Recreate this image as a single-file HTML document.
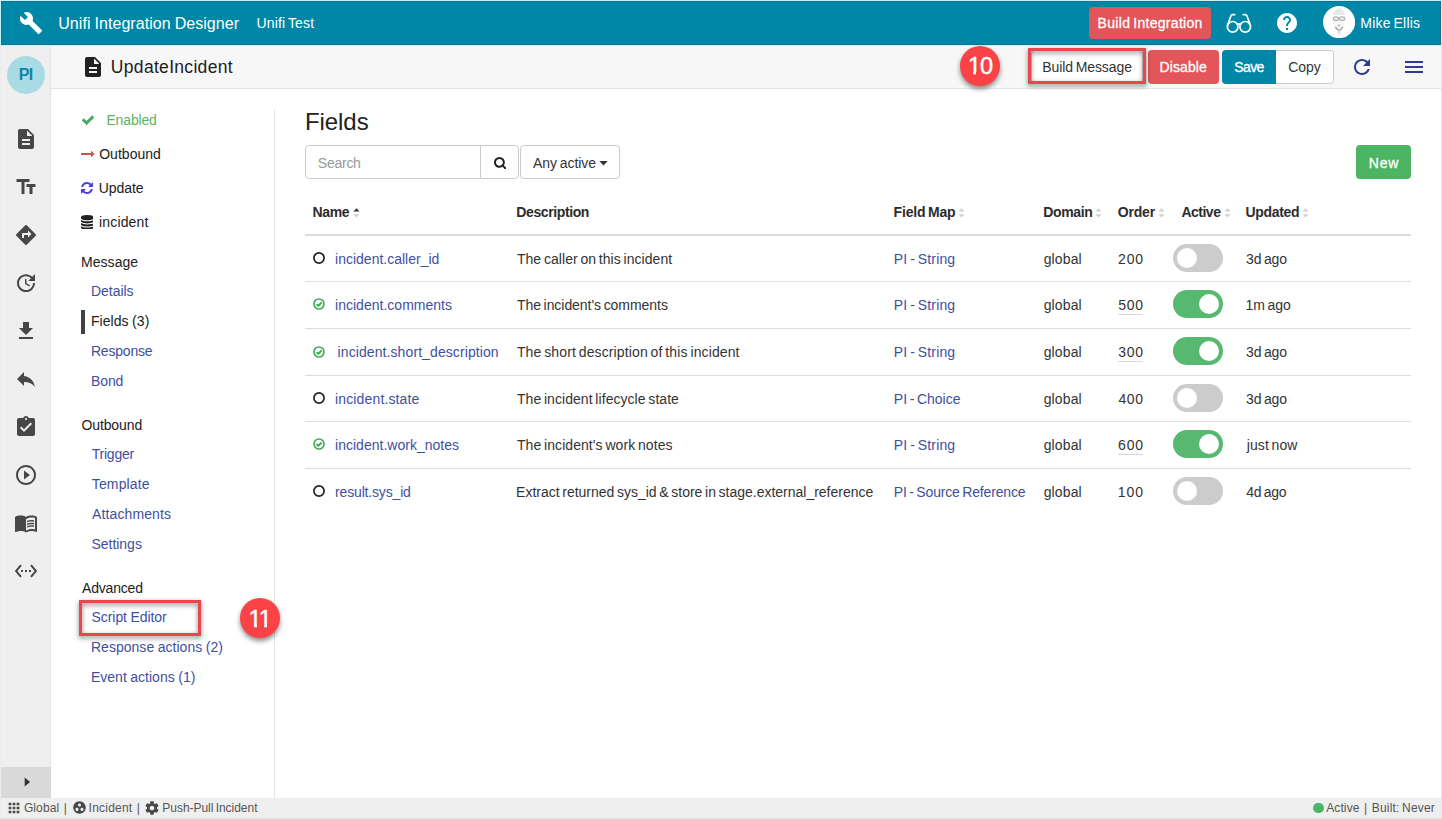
<!DOCTYPE html>
<html lang="en">
<head>
<meta charset="utf-8">
<title>Unifi Integration Designer</title>
<style>
*{box-sizing:border-box;margin:0;padding:0}
html,body{width:1442px;height:819px;overflow:hidden;background:#fff}
body{position:relative;font-family:"Liberation Sans",sans-serif;color:#212121;font-size:14px}
.abs,.t,svg.i{position:absolute}
.t{white-space:nowrap;line-height:20px;height:20px;z-index:5}
#frame{position:absolute;left:0;top:46px;width:1442px;height:773px;border:1px solid #e6e6e6;border-left-color:#ececec;border-bottom-color:#e2e2e2;border-top:0;z-index:50}
#hdr{left:1px;top:1px;width:1440px;height:43.500px;background:#0086a6;border:1px solid #17718c}
#hdrglow{left:0;top:0;width:1442px;height:46px;background:#c6f4fb}
#hdrglow2{left:0;top:45.500px;width:1442px;height:1px;background:#f3f3f3}
#side{left:1px;top:45.500px;width:50px;height:752.500px;background:#efefef;border-right:1px solid #e5e5e5}
#exp{left:1px;top:767px;width:50px;height:31px;background:#d9d9d9}
#tool{left:51px;top:45.500px;width:1390px;height:43.500px;background:#f7f7f7;border-bottom:1px solid #e5e5e5}
#foot{left:1px;top:798px;width:1440px;height:20px;background:#efefef}
#navline{left:274px;top:109px;width:1px;height:689px;background:#e6e6e6}
.btn{position:absolute;border-radius:4px;border:1px solid transparent}
.sep{position:absolute;left:305px;width:1106px;height:1px;background:#dddddd}
.tog{position:absolute;left:1173px;width:50px;height:28px;border-radius:14px;background:#cccccc}
.tog i{position:absolute;top:4px;left:3.500px;width:20px;height:20px;border-radius:50%;background:#fff}
.tog.on{background:#57b86f}
.tog.on i{left:25.500px}
.ul{position:absolute;left:1118px;width:25px;height:1px;background:#d8d8d8}
.badge{position:absolute;width:40px;height:40px;border-radius:50%;background:#fb4347;box-shadow:0 3px 5px rgba(0,0,0,.45);z-index:4}
.hl{position:absolute;border:3px solid #e8484d;filter:drop-shadow(0 2px 2.500px rgba(0,0,0,.5));z-index:4}
</style>
</head>
<body>
<div id="hdrglow" class="abs"></div>
<div id="hdr" class="abs"></div>
<div id="side" class="abs"></div>
<div id="exp" class="abs"></div>
<div id="tool" class="abs"></div>
<div id="navline" class="abs"></div>
<div id="foot" class="abs"></div>
<!-- header icons -->
<svg class="i" style="left:19px;top:11.200px" width="24" height="24" viewBox="0 0 24 24"><path fill="#fff" d="M22.7 19l-9.1-9.1c.9-2.3.4-5-1.500-6.900-2-2-5-2.400-7.400-1.300L9 6 6 9 1.600 4.700C.4 7.100.9 10.100 2.900 12.100c1.900 1.900 4.600 2.400 6.900 1.500l9.100 9.100c.4.400 1 .4 1.400 0l2.300-2.300c.5-.4.5-1.100.1-1.400z"/></svg>
<div class="btn" style="left:1089.300px;top:7.200px;width:121.600px;height:31.400px;background:#e35558"></div>
<svg class="i" style="left:1224px;top:11px" width="30" height="24" viewBox="0 0 30 24" fill="none" stroke="#fff" stroke-width="1.7" stroke-linecap="round" stroke-linejoin="round"><circle cx="8.7" cy="15.8" r="5.3"/><circle cx="21.2" cy="15.800" r="5.3"/><path d="M13.600 13.500q1.350-1.100 2.700 0"/><path d="M3.400 14.500L7 4.800q.4-1.100 1.600-1.100h2.100"/><path d="M26.500 14.500L22.900 4.800q-.4-1.100-1.600-1.100h-2.100"/></svg>
<svg class="i" style="left:1275px;top:10.500px" width="24" height="24" viewBox="0 0 24 24"><path fill="#fff" d="M12 2C6.480 2 2 6.480 2 12s4.480 10 10 10 10-4.480 10-10S17.520 2 12 2zm1 17h-2v-2h2v2zm2.070-7.750l-.9.920C13.450 12.900 13 13.500 13 15h-2v-.5c0-1.100.45-2.100 1.170-2.830l1.240-1.260c.37-.36.590-.86.590-1.410 0-1.100-.9-2-2-2s-2 .9-2 2H8c0-2.210 1.790-4 4-4s4 1.790 4 4c0 .88-.36 1.680-.93 2.250z"/></svg>
<svg class="i" style="left:1323px;top:5.800px" width="32.200" height="32.200" viewBox="0 0 32 32"><circle cx="16" cy="16" r="16" fill="#fff"/><path d="M10.200 8.900Q10.500 4.200 16 1.900 21.500 4.200 21.800 8.900z" fill="#e8e8e8"/><path d="M10.800 15.500h10.400l-.6 4.500-4.600 9.500-4.600-9.500z" fill="#f6f6f6"/><rect x="10.400" y="10.900" width="5" height="3.400" rx=".8" fill="#ececec" stroke="#9a9a9a" stroke-width=".9"/><rect x="16.600" y="10.900" width="5" height="3.400" rx=".8" fill="#ececec" stroke="#9a9a9a" stroke-width=".9"/><path d="M14.400 18.400h3.200l-.9 1.900h-1.400z" fill="#c4c4c4"/><path d="M12.300 20.800Q16 27.300 19.700 20.800" fill="none" stroke="#a8a8a8" stroke-width="1.500"/><path d="M14 24.300h4l-2 5.300z" fill="#dedede"/></svg>
<!-- sidebar -->
<div class="abs" style="left:7px;top:55.500px;width:38px;height:38px;border-radius:50%;background:#a9dbe5"></div>
<svg class="i" style="left:14px;top:127px" width="24" height="24" viewBox="0 0 24 24"><path fill="#474747" d="M14 2H6c-1.100 0-1.990.9-1.990 2L4 20c0 1.100.89 2 1.990 2H18c1.100 0 2-.9 2-2V8l-6-6zm2 16H8v-2h8v2zm0-4H8v-2h8v2zm-3-5V3.500L18.500 9H13z"/></svg>
<svg class="i" style="left:14.400px;top:175px" width="24" height="24" viewBox="0 0 24 24"><path fill="#474747" d="M2.500 4v3h5v12h3V7h5V4h-13zm19 5h-9v3h3v7h3v-7h3V9z"/></svg>
<svg class="i" style="left:14.250px;top:223.400px" width="24" height="24" viewBox="0 0 24 24"><path fill="#474747" d="M21.710 11.290l-9-9c-.39-.39-1.020-.39-1.410 0l-9 9c-.39.390-.39 1.020 0 1.410l9 9c.39.390 1.020.390 1.410 0l9-9c.39-.38.390-1.010 0-1.410zM14 14.500V12h-4v3H8v-4c0-.55.450-1 1-1h5V7.500l3.500 3.500-3.500 3.500z"/></svg>
<svg class="i" style="left:14px;top:270.700px" width="24" height="24" viewBox="0 0 24 24"><path fill="#474747" d="M21 10.120h-6.780l2.740-2.820c-2.730-2.700-7.150-2.800-9.880-.1-2.730 2.710-2.730 7.080 0 9.790 2.730 2.710 7.150 2.710 9.880 0C18.320 15.650 19 14.080 19 12.100h2c0 1.980-.88 4.550-2.640 6.290-3.510 3.480-9.210 3.480-12.720 0-3.500-3.470-3.530-9.110-.020-12.580 3.510-3.470 9.140-3.470 12.650 0L21 3v7.120zM12.500 8v4.250l3.500 2.080-.72 1.210L11 13V8h1.500z"/></svg>
<svg class="i" style="left:14px;top:318.700px" width="24" height="24" viewBox="0 0 24 24"><path fill="#474747" d="M19 9h-4V3H9v6H5l7 7 7-7zM5 18v2h14v-2H5z"/></svg>
<svg class="i" style="left:14px;top:366.700px" width="24" height="24" viewBox="0 0 24 24"><path fill="#474747" d="M10 9V5l-7 7 7 7v-4.100c5 0 8.500 1.600 11 5.100-1-5-4-10-11-11z"/></svg>
<svg class="i" style="left:14px;top:415px" width="24" height="24" viewBox="0 0 24 24"><path fill="#474747" d="M19 3h-4.180C14.400 1.840 13.300 1 12 1c-1.300 0-2.400.84-2.820 2H5c-1.100 0-2 .9-2 2v14c0 1.100.9 2 2 2h14c1.100 0 2-.9 2-2V5c0-1.100-.9-2-2-2zm-7 0c.55 0 1 .45 1 1s-.45 1-1 1-1-.45-1-1 .45-1 1-1zm-2 14l-4-4 1.410-1.410L10 14.170l6.590-6.590L18 9l-8 8z"/></svg>
<svg class="i" style="left:14px;top:462.600px" width="24" height="24" viewBox="0 0 24 24"><path fill="#474747" d="M10 16.500l6-4.500-6-4.500v9zM12 2C6.480 2 2 6.480 2 12s4.480 10 10 10 10-4.480 10-10S17.520 2 12 2zm0 18c-4.410 0-8-3.590-8-8s3.590-8 8-8 8 3.590 8 8-3.590 8-8 8z"/></svg>
<svg class="i" style="left:13.700px;top:510.700px" width="24" height="24" viewBox="0 0 24 24"><path fill="#474747" d="M21 5c-1.110-.35-2.330-.5-3.500-.5-1.950 0-4.050.4-5.500 1.500-1.450-1.100-3.550-1.500-5.500-1.500S2.450 4.900 1 6v14.650c0 .25.250.5.5.5.100 0 .150-.05.250-.05C3.100 20.450 5.050 20 6.500 20c1.950 0 4.050.4 5.500 1.500 1.350-.85 3.800-1.500 5.500-1.500 1.650 0 3.350.3 4.750 1.050.100.050.150.050.250.050.250 0 .5-.25.5-.5V6c-.6-.45-1.250-.75-2-1zm0 13.500c-1.100-.35-2.300-.5-3.500-.5-1.700 0-4.150.65-5.500 1.500V8c1.350-.85 3.800-1.500 5.500-1.500 1.200 0 2.400.15 3.500.5v11.500z"/><path fill="#474747" d="M17.500 10.500c.88 0 1.730.09 2.500.26V9.240c-.79-.15-1.640-.24-2.500-.24-1.700 0-3.240.29-4.500.83v1.660c1.130-.64 2.700-.99 4.500-.99zM13 12.490v1.660c1.130-.64 2.700-.99 4.500-.99.880 0 1.730.09 2.500.26V11.900c-.79-.15-1.640-.24-2.500-.24-1.700 0-3.240.3-4.500.83zM17.500 14.330c-1.700 0-3.240.29-4.500.83v1.660c1.130-.64 2.700-.99 4.500-.99.880 0 1.730.09 2.500.26v-1.520c-.79-.16-1.640-.24-2.500-.24z"/></svg>
<svg class="i" style="left:14px;top:558.600px" width="24" height="24" viewBox="0 0 24 24"><path fill="#474747" d="M7.770 6.760L6.230 5.480.82 12l5.410 6.520 1.540-1.280L3.420 12l4.350-5.240zM7 13h2v-2H7v2zm10-2h-2v2h2v-2zm-6 2h2v-2h-2v2zm6.770-7.520l-1.540 1.280L20.580 12l-4.350 5.240 1.540 1.280L23.180 12l-5.410-6.520z"/></svg>
<svg class="i" style="left:15.400px;top:770.200px" width="24" height="24" viewBox="0 0 24 24"><path fill="#333" d="M9.700 7.500l5.400 4.500-5.400 4.500z"/></svg>
<!-- toolbar -->
<svg class="i" style="left:81px;top:54.500px" width="24" height="24" viewBox="0 0 24 24"><path fill="#212121" d="M14 2H6c-1.100 0-1.990.9-1.990 2L4 20c0 1.100.89 2 1.990 2H18c1.100 0 2-.9 2-2V8l-6-6zm2 16H8v-2h8v2zm0-4H8v-2h8v2zm-3-5V3.500L18.500 9H13z"/></svg>
<div class="badge" style="left:960px;top:46px"></div>
<div class="btn" style="left:1031px;top:50px;width:112px;height:34px;background:#fff;border-color:#ccc"></div>
<div class="hl" style="left:1028px;top:48px;width:118px;height:36px"></div>
<div class="btn" style="left:1147.600px;top:50px;width:71.400px;height:34px;background:#e35558"></div>
<div class="btn" style="left:1222px;top:50px;width:55px;height:34px;background:#0087a7;border-radius:4px 0 0 4px"></div>
<div class="btn" style="left:1276px;top:50px;width:58px;height:34px;background:#fff;border-color:#ccc;border-left:0;border-radius:0 4px 4px 0"></div>
<svg class="i" style="left:1350px;top:55px" width="24" height="24" viewBox="0 0 24 24"><path fill="#2f3a94" d="M17.650 6.350C16.200 4.900 14.210 4 12 4c-4.420 0-7.990 3.580-7.990 8s3.570 8 7.990 8c3.730 0 6.840-2.550 7.730-6h-2.080c-.82 2.330-3.040 4-5.650 4-3.310 0-6-2.690-6-6s2.690-6 6-6c1.660 0 3.140.69 4.220 1.780L13 11h7V4l-2.350 2.350z"/></svg>
<svg class="i" style="left:1402.400px;top:55px" width="24" height="24" viewBox="0 0 24 24"><path fill="#2f3a94" d="M3 18h18v-2H3v2zm0-5h18v-2H3v2zm0-7v2h18V6H3z"/></svg>
<!-- nav icons -->
<svg class="i" style="left:81px;top:113.300px" width="14" height="14" viewBox="0 0 1792 1792"><path fill="#46aa5c" d="M1671 566q0 40-28 68l-724 724-136 136q-28 28-68 28t-68-28l-136-136-362-362q-28-28-28-68t28-68l136-136q28-28 68-28t68 28l294 295 656-657q28-28 68-28t68 28l136 136q28 28 28 68z"/></svg>
<svg class="i" style="left:80.500px;top:146.700px" width="14" height="14" viewBox="0 0 1792 1792"><path fill="#cc5452" d="M1728 893q0 14-10 24l-384 354q-16 14-35 6-19-9-19-29v-224h-1248q-14 0-23-9t-9-23v-192q0-14 9-23t23-9h1248v-224q0-21 19-29t35 5l384 350q10 10 10 23z"/></svg>
<svg class="i" style="left:80px;top:181.200px" width="14" height="14" viewBox="0 0 1792 1792"><path fill="#4b41d8" d="M1639 1056q0 5-1 7-64 268-268 434.500t-478 166.500q-146 0-282.500-55t-243.500-157l-129 129q-19 19-45 19t-45-19-19-45v-448q0-26 19-45t45-19h448q26 0 45 19t19 45-19 45l-137 137q71 66 161 102t187 36q134 0 250-65t186-179q11-17 53-117 8-23 30-23h192q13 0 22.500 9.500t9.500 22.500zm25-800v448q0 26-19 45t-45 19h-448q-26 0-45-19t-19-45 19-45l138-138q-148-137-349-137-134 0-250 65t-186 179q-11 17-53 117-8 23-30 23h-199q-13 0-22.500-9.500t-9.500-22.500v-7q65-268 270-434.500t480-166.500q146 0 284 55.500t245 156.500l130-129q19-19 45-19t45 19 19 45z"/></svg>
<svg class="i" style="left:80.800px;top:214.500px" width="12.600" height="14.700" viewBox="0 0 1536 1792"><path fill="#222" d="M768 768q237 0 443-43t325-127v170q0 69-103 128t-280 93.500-385 34.500-385-34.500-280-93.500-103-128v-170q119 84 325 127t443 43zm0 768q237 0 443-43t325-127v170q0 69-103 128t-280 93.500-385 34.500-385-34.500-280-93.500-103-128v-170q119 84 325 127t443 43zm0-384q237 0 443-43t325-127v170q0 69-103 128t-280 93.500-385 34.500-385-34.500-280-93.500-103-128v-170q119 84 325 127t443 43zm0-1152q208 0 385 34.500t280 93.500 103 128v128q0 69-103 128t-280 93.500-385 34.500-385-34.500-280-93.500-103-128v-128q0-69 103-128t280-93.500 385-34.500z"/></svg>
<div class="abs" style="left:81px;top:310px;width:4px;height:24px;background:#424242"></div>
<div class="hl" style="left:79.200px;top:600.300px;width:122px;height:35.700px"></div>
<div class="badge" style="left:240px;top:598px"></div>
<!-- content -->
<div class="btn" style="left:305px;top:145px;width:176px;height:34px;background:#fff;border-color:#ccc;border-radius:4px 0 0 4px"></div>
<div class="btn" style="left:480px;top:145px;width:38.700px;height:34px;background:#fff;border-color:#ccc;border-radius:0 4px 4px 0"></div>
<svg class="i" style="left:493.500px;top:155.500px" width="12.800" height="13.800" viewBox="0 0 1664 1792"><path fill="#222" d="M1152 832q0-185-131.500-316.500t-316.500-131.500-316.500 131.500-131.500 316.500 131.500 316.500 316.500 131.500 316.500-131.500 131.500-316.500zm512 832q0 52-38 90t-90 38q-54 0-90-38l-343-342q-179 124-399 124-143 0-273.500-55.500t-225-150-150-225-55.500-273.500 55.500-273.500 150-225 225-150 273.500-55.500 273.500 55.500 225 150 150 225 55.500 273.500q0 220-124 399l343 343q37 37 37 90z"/></svg>
<div class="btn" style="left:519.700px;top:145px;width:100.500px;height:34px;background:#fff;border-color:#ccc"></div>
<svg class="i" style="left:598.700px;top:160.800px" width="9" height="5" viewBox="0 0 9 5"><path fill="#333" d="M.3 0h8.400L4.500 4.500z"/></svg>
<div class="btn" style="left:1356px;top:145px;width:55px;height:34px;background:#4cb563"></div>
<div class="abs" style="left:305px;top:234px;width:1106px;height:2px;background:#dcdcdc"></div>
<div class="sep" style="top:281px"></div>
<div class="sep" style="top:328px"></div>
<div class="sep" style="top:375px"></div>
<div class="sep" style="top:421px"></div>
<div class="sep" style="top:468px"></div>
<svg class="i" style="left:352.5px;top:207.500px" width="7" height="10" viewBox="0 0 7 10"><path fill="#333" d="M.4 3.600h6.200L3.500.3z"/><path fill="#cfcfcf" d="M.4 6.200h6.200L3.500 9.500z"/></svg>
<svg class="i" style="left:957.6px;top:207.500px" width="7" height="10" viewBox="0 0 7 10"><path fill="#cfcfcf" d="M.4 3.600h6.200L3.500.3z"/><path fill="#cfcfcf" d="M.4 6.200h6.200L3.500 9.500z"/></svg>
<svg class="i" style="left:1094.5px;top:207.500px" width="7" height="10" viewBox="0 0 7 10"><path fill="#cfcfcf" d="M.4 3.600h6.200L3.500.3z"/><path fill="#cfcfcf" d="M.4 6.200h6.200L3.500 9.500z"/></svg>
<svg class="i" style="left:1157.8px;top:207.500px" width="7" height="10" viewBox="0 0 7 10"><path fill="#cfcfcf" d="M.4 3.600h6.200L3.500.3z"/><path fill="#cfcfcf" d="M.4 6.200h6.200L3.500 9.500z"/></svg>
<svg class="i" style="left:1223.5px;top:207.500px" width="7" height="10" viewBox="0 0 7 10"><path fill="#cfcfcf" d="M.4 3.600h6.200L3.500.3z"/><path fill="#cfcfcf" d="M.4 6.200h6.200L3.500 9.500z"/></svg>
<svg class="i" style="left:1301.6px;top:207.500px" width="7" height="10" viewBox="0 0 7 10"><path fill="#cfcfcf" d="M.4 3.600h6.200L3.500.3z"/><path fill="#cfcfcf" d="M.4 6.200h6.200L3.500 9.500z"/></svg>
<svg class="i" style="left:312.400px;top:251.00px" width="14" height="14" viewBox="0 0 14 14" fill="none" stroke="#222" stroke-width="1.700"><circle cx="7" cy="7" r="5.100"/></svg>
<div class="tog" style="top:244.0px"><i></i></div>
<svg class="i" style="left:312.400px;top:297.10px" width="14" height="14" viewBox="0 0 14 14" fill="none" stroke="#46aa5c" stroke-width="1.700"><circle cx="7" cy="7" r="5"/><path stroke-width="2" d="M4.500 7.100l1.800 1.800 3.300-3.400"/></svg>
<div class="ul" style="top:314px"></div>
<div class="tog on" style="top:290.1px"><i></i></div>
<svg class="i" style="left:312.400px;top:345.10px" width="14" height="14" viewBox="0 0 14 14" fill="none" stroke="#46aa5c" stroke-width="1.700"><circle cx="7" cy="7" r="5"/><path stroke-width="2" d="M4.500 7.100l1.800 1.800 3.300-3.400"/></svg>
<div class="ul" style="top:361px"></div>
<div class="tog on" style="top:337.2px"><i></i></div>
<svg class="i" style="left:312.400px;top:391.00px" width="14" height="14" viewBox="0 0 14 14" fill="none" stroke="#222" stroke-width="1.700"><circle cx="7" cy="7" r="5.100"/></svg>
<div class="tog" style="top:384.0px"><i></i></div>
<svg class="i" style="left:312.400px;top:437.05px" width="14" height="14" viewBox="0 0 14 14" fill="none" stroke="#46aa5c" stroke-width="1.700"><circle cx="7" cy="7" r="5"/><path stroke-width="2" d="M4.500 7.100l1.800 1.800 3.300-3.400"/></svg>
<div class="ul" style="top:454px"></div>
<div class="tog on" style="top:430.2px"><i></i></div>
<svg class="i" style="left:312.400px;top:483.80px" width="14" height="14" viewBox="0 0 14 14" fill="none" stroke="#222" stroke-width="1.700"><circle cx="7" cy="7" r="5.100"/></svg>
<div class="tog" style="top:477.2px"><i></i></div>
<!-- footer -->
<svg class="i" style="left:6px;top:799.500px" width="16" height="16" viewBox="0 0 24 24"><path fill="#474747" d="M4 8h4V4H4v4zm6 12h4v-4h-4v4zm-6 0h4v-4H4v4zm0-6h4v-4H4v4zm6 0h4v-4h-4v4zm6-10v4h4V4h-4zm-6 4h4V4h-4v4zm6 6h4v-4h-4v4zm0 6h4v-4h-4v4z"/></svg>
<svg class="i" style="left:71.700px;top:800.200px" width="15" height="15" viewBox="0 0 24 24"><path fill="#474747" d="M12 2C6.480 2 2 6.480 2 12s4.480 10 10 10 10-4.480 10-10S17.520 2 12 2zM8 17.500c-1.380 0-2.500-1.120-2.500-2.500s1.120-2.500 2.500-2.500 2.500 1.120 2.500 2.500-1.120 2.500-2.500 2.500zM9.500 8c0-1.380 1.120-2.500 2.500-2.500s2.500 1.120 2.500 2.500-1.120 2.500-2.500 2.500S9.500 9.380 9.500 8zm6.500 9.500c-1.380 0-2.500-1.120-2.500-2.500s1.120-2.500 2.500-2.500 2.500 1.120 2.500 2.500-1.120 2.500-2.500 2.500z"/></svg>
<svg class="i" style="left:144.300px;top:799.700px" width="16" height="16" viewBox="0 0 24 24"><path fill="#474747" d="M19.430 12.980c.04-.32.070-.64.070-.98s-.03-.66-.07-.98l2.110-1.650c.19-.15.240-.42.120-.64l-2-3.460c-.12-.22-.39-.3-.61-.22l-2.490 1c-.52-.4-1.080-.73-1.690-.98l-.38-2.650C14.460 2.180 14.250 2 14 2h-4c-.25 0-.46.180-.49.420l-.38 2.650c-.61.250-1.170.590-1.690.98l-2.490-1c-.23-.09-.49 0-.61.220l-2 3.460c-.13.220-.07.490.12.640l2.110 1.650c-.04.320-.07.650-.07.980s.03.660.07.980l-2.110 1.650c-.19.150-.24.420-.12.640l2 3.460c.12.220.39.300.61.220l2.490-1c.52.400 1.080.730 1.690.98l.38 2.650c.03.240.24.420.49.420h4c.25 0 .46-.18.490-.42l.38-2.650c.61-.25 1.170-.59 1.690-.98l2.490 1c.23.090.49 0 .61-.22l2-3.460c.12-.22.070-.49-.12-.64l-2.110-1.650zM12 15.500c-1.930 0-3.500-1.570-3.500-3.500s1.570-3.500 3.500-3.500 3.500 1.570 3.500 3.500-1.570 3.500-3.500 3.500z"/></svg>
<div class="abs" style="left:1313.300px;top:802.500px;width:10.500px;height:10.500px;border-radius:50%;background:#4cb563"></div>
<!-- badge digit foot covers -->
<div class="abs" style="left:968.400px;top:71.600px;width:4.600px;height:3.700px;background:#fb4347;z-index:7"></div>
<div class="abs" style="left:976px;top:71.600px;width:4.500px;height:3.700px;background:#fb4347;z-index:7"></div>
<div class="abs" style="left:249.400px;top:624.600px;width:4.600px;height:3.700px;background:#fb4347;z-index:7"></div>
<div class="abs" style="left:257px;top:624.600px;width:7px;height:3.700px;background:#fb4347;z-index:7"></div>
<div class="abs" style="left:267px;top:624.600px;width:5px;height:3.700px;background:#fb4347;z-index:7"></div>

<span class="t" style="left:58.27px;top:14.00px;font-size:16px;font-weight:400;color:#fff;letter-spacing:0.047px;word-spacing:-0.48px">Unifi Integration Designer</span>
<span class="t" style="left:256.42px;top:13.00px;font-size:14px;font-weight:400;color:#fff;letter-spacing:0.172px;word-spacing:-1.19px">Unifi Test</span>
<span class="t" style="left:1097.60px;top:13.00px;font-size:14px;font-weight:400;color:#fff;letter-spacing:0.301px;word-spacing:-1.19px;-webkit-text-stroke:.3px #fff">Build Integration</span>
<span class="t" style="left:1360.35px;top:13.00px;font-size:14px;font-weight:400;color:#fff;letter-spacing:0.191px;word-spacing:-1.19px">Mike Ellis</span>
<span class="t" style="left:110.85px;top:57.00px;font-size:17.5px;font-weight:400;color:#212121;letter-spacing:0.311px">UpdateIncident</span>
<span class="t" style="left:18.63px;top:65.00px;font-size:16px;font-weight:700;color:#0c86a5;letter-spacing:-0.584px">PI</span>
<span class="t" style="left:968.11px;top:56.00px;font-size:23.5px;font-weight:400;color:#fff;letter-spacing:-1.133px;z-index:6;-webkit-text-stroke:.45px #fff">10</span>
<span class="t" style="left:1042.35px;top:57.00px;font-size:14px;font-weight:400;color:#333333;letter-spacing:-0.089px;word-spacing:-1.19px">Build Message</span>
<span class="t" style="left:1159.60px;top:57.00px;font-size:14px;font-weight:400;color:#fff;letter-spacing:0.095px;-webkit-text-stroke:.3px #fff">Disable</span>
<span class="t" style="left:1234.36px;top:57.00px;font-size:14px;font-weight:400;color:#fff;letter-spacing:-0.638px;-webkit-text-stroke:.3px #fff">Save</span>
<span class="t" style="left:1288.29px;top:57.00px;font-size:14px;font-weight:400;color:#333333;letter-spacing:-0.066px">Copy</span>
<span class="t" style="left:106.45px;top:110.00px;font-size:14px;font-weight:400;color:#5cb460;letter-spacing:-0.157px">Enabled</span>
<span class="t" style="left:99.14px;top:144.00px;font-size:14px;font-weight:400;color:#212121;letter-spacing:0.038px">Outbound</span>
<span class="t" style="left:98.72px;top:178.00px;font-size:14px;font-weight:400;color:#212121;letter-spacing:-0.051px">Update</span>
<span class="t" style="left:99.06px;top:212.00px;font-size:14px;font-weight:400;color:#212121;letter-spacing:0.146px">incident</span>
<span class="t" style="left:80.95px;top:252.00px;font-size:14px;font-weight:400;color:#212121;letter-spacing:0.060px">Message</span>
<span class="t" style="left:81.44px;top:415.00px;font-size:14px;font-weight:400;color:#212121;letter-spacing:-0.105px">Outbound</span>
<span class="t" style="left:82.07px;top:578.00px;font-size:14px;font-weight:400;color:#212121;letter-spacing:-0.193px">Advanced</span>
<span class="t" style="left:90.95px;top:281.00px;font-size:14px;font-weight:400;color:#3f4f9f;letter-spacing:-0.024px">Details</span>
<span class="t" style="left:90.95px;top:311.00px;font-size:14px;font-weight:400;color:#212121;letter-spacing:0.053px;word-spacing:-0.42px">Fields (3)</span>
<span class="t" style="left:90.95px;top:341.00px;font-size:14px;font-weight:400;color:#3f4f9f;letter-spacing:-0.197px">Response</span>
<span class="t" style="left:90.95px;top:371.00px;font-size:14px;font-weight:400;color:#3f4f9f;letter-spacing:-0.084px">Bond</span>
<span class="t" style="left:91.79px;top:444.00px;font-size:14px;font-weight:400;color:#3f4f9f;letter-spacing:-0.247px">Trigger</span>
<span class="t" style="left:91.79px;top:474.00px;font-size:14px;font-weight:400;color:#3f4f9f;letter-spacing:0.132px">Template</span>
<span class="t" style="left:92.07px;top:504.00px;font-size:14px;font-weight:400;color:#3f4f9f;letter-spacing:0.111px">Attachments</span>
<span class="t" style="left:91.46px;top:534.00px;font-size:14px;font-weight:400;color:#3f4f9f;letter-spacing:-0.022px">Settings</span>
<span class="t" style="left:91.46px;top:607.00px;font-size:14px;font-weight:400;color:#3f4f9f;letter-spacing:-0.047px;word-spacing:-0.42px">Script Editor</span>
<span class="t" style="left:90.95px;top:637.00px;font-size:14px;font-weight:400;color:#3f4f9f;letter-spacing:0.029px;word-spacing:-0.42px">Response actions (2)</span>
<span class="t" style="left:90.95px;top:667.00px;font-size:14px;font-weight:400;color:#3f4f9f;letter-spacing:0.012px;word-spacing:-0.42px">Event actions (1)</span>
<span class="t" style="left:248.61px;top:609.00px;font-size:23.5px;font-weight:400;color:#fff;letter-spacing:-1.200px;z-index:6;-webkit-text-stroke:.45px #fff">11</span>
<span class="t" style="left:304.93px;top:112.00px;font-size:24px;font-weight:400;color:#212121;letter-spacing:-0.059px">Fields</span>
<span class="t" style="left:317.86px;top:153.00px;font-size:14px;font-weight:400;color:#999;letter-spacing:-0.263px">Search</span>
<span class="t" style="left:532.97px;top:153.00px;font-size:14px;font-weight:400;color:#333333;letter-spacing:-0.028px;word-spacing:-1.19px">Any active</span>
<span class="t" style="left:1368.75px;top:153.00px;font-size:14px;font-weight:400;color:#fff;letter-spacing:0.799px;-webkit-text-stroke:.3px #fff">New</span>
<span class="t" style="left:312.56px;top:202.00px;font-size:14px;font-weight:700;color:#2c2c2c;letter-spacing:-0.409px">Name</span>
<span class="t" style="left:516.31px;top:202.00px;font-size:14px;font-weight:700;color:#2c2c2c;letter-spacing:-0.396px">Description</span>
<span class="t" style="left:893.56px;top:202.00px;font-size:14px;font-weight:700;color:#2c2c2c;letter-spacing:-0.170px;word-spacing:-1.19px">Field Map</span>
<span class="t" style="left:1043.31px;top:202.00px;font-size:14px;font-weight:700;color:#2c2c2c;letter-spacing:-0.358px">Domain</span>
<span class="t" style="left:1117.68px;top:202.00px;font-size:14px;font-weight:700;color:#2c2c2c;letter-spacing:-0.147px">Order</span>
<span class="t" style="left:1181.40px;top:202.00px;font-size:14px;font-weight:700;color:#2c2c2c;letter-spacing:-0.491px">Active</span>
<span class="t" style="left:1245.41px;top:202.00px;font-size:14px;font-weight:700;color:#2c2c2c;letter-spacing:-0.289px">Updated</span>
<span class="t" style="left:335.06px;top:249.00px;font-size:14px;font-weight:400;color:#3f4f9f;letter-spacing:0.002px">incident.caller_id</span>
<span class="t" style="left:516.94px;top:249.00px;font-size:14px;font-weight:400;color:#333333;letter-spacing:0.045px;word-spacing:-1.19px">The caller on this incident</span>
<span class="t" style="left:893.85px;top:249.00px;font-size:14px;font-weight:400;color:#3f4f9f;letter-spacing:0.143px;word-spacing:-1.19px">PI - String</span>
<span class="t" style="left:1043.66px;top:249.00px;font-size:14px;font-weight:400;color:#333333;letter-spacing:0.130px">global</span>
<span class="t" style="left:1118.05px;top:249.00px;font-size:14px;font-weight:400;color:#333333;letter-spacing:0.821px">200</span>
<span class="t" style="left:1245.97px;top:249.00px;font-size:14px;font-weight:400;color:#333333;letter-spacing:-0.103px;word-spacing:-1.19px">3d ago</span>
<span class="t" style="left:335.06px;top:295.00px;font-size:14px;font-weight:400;color:#3f4f9f;letter-spacing:0.014px">incident.comments</span>
<span class="t" style="left:516.94px;top:295.00px;font-size:14px;font-weight:400;color:#333333;letter-spacing:-0.048px;word-spacing:-1.19px">The incident's comments</span>
<span class="t" style="left:893.85px;top:295.00px;font-size:14px;font-weight:400;color:#3f4f9f;letter-spacing:0.143px;word-spacing:-1.19px">PI - String</span>
<span class="t" style="left:1043.66px;top:295.00px;font-size:14px;font-weight:400;color:#333333;letter-spacing:0.130px">global</span>
<span class="t" style="left:1118.19px;top:295.00px;font-size:14px;font-weight:400;color:#333333;letter-spacing:0.749px">500</span>
<span class="t" style="left:1245.43px;top:295.00px;font-size:14px;font-weight:400;color:#333333;letter-spacing:-0.022px;word-spacing:-1.19px">1m ago</span>
<span class="t" style="left:337.56px;top:342.00px;font-size:14px;font-weight:400;color:#3f4f9f;letter-spacing:0.093px">incident.short_description</span>
<span class="t" style="left:516.94px;top:342.00px;font-size:14px;font-weight:400;color:#333333;letter-spacing:0.119px;word-spacing:-1.19px">The short description of this incident</span>
<span class="t" style="left:893.85px;top:342.00px;font-size:14px;font-weight:400;color:#3f4f9f;letter-spacing:0.143px;word-spacing:-1.19px">PI - String</span>
<span class="t" style="left:1043.66px;top:342.00px;font-size:14px;font-weight:400;color:#333333;letter-spacing:0.130px">global</span>
<span class="t" style="left:1118.22px;top:342.00px;font-size:14px;font-weight:400;color:#333333;letter-spacing:0.735px">300</span>
<span class="t" style="left:1245.97px;top:342.00px;font-size:14px;font-weight:400;color:#333333;letter-spacing:-0.103px;word-spacing:-1.19px">3d ago</span>
<span class="t" style="left:335.06px;top:389.00px;font-size:14px;font-weight:400;color:#3f4f9f;letter-spacing:0.139px">incident.state</span>
<span class="t" style="left:516.94px;top:389.00px;font-size:14px;font-weight:400;color:#333333;letter-spacing:0.050px;word-spacing:-1.19px">The incident lifecycle state</span>
<span class="t" style="left:893.85px;top:389.00px;font-size:14px;font-weight:400;color:#3f4f9f;letter-spacing:-0.030px;word-spacing:-1.19px">PI - Choice</span>
<span class="t" style="left:1043.66px;top:389.00px;font-size:14px;font-weight:400;color:#333333;letter-spacing:0.130px">global</span>
<span class="t" style="left:1118.43px;top:389.00px;font-size:14px;font-weight:400;color:#333333;letter-spacing:0.629px">400</span>
<span class="t" style="left:1245.97px;top:389.00px;font-size:14px;font-weight:400;color:#333333;letter-spacing:-0.103px;word-spacing:-1.19px">3d ago</span>
<span class="t" style="left:335.06px;top:435.00px;font-size:14px;font-weight:400;color:#3f4f9f;letter-spacing:0.011px">incident.work_notes</span>
<span class="t" style="left:516.94px;top:435.00px;font-size:14px;font-weight:400;color:#333333;letter-spacing:0.067px;word-spacing:-1.19px">The incident's work notes</span>
<span class="t" style="left:893.85px;top:435.00px;font-size:14px;font-weight:400;color:#3f4f9f;letter-spacing:0.143px;word-spacing:-1.19px">PI - String</span>
<span class="t" style="left:1043.66px;top:435.00px;font-size:14px;font-weight:400;color:#333333;letter-spacing:0.130px">global</span>
<span class="t" style="left:1118.04px;top:435.00px;font-size:14px;font-weight:400;color:#333333;letter-spacing:0.824px">600</span>
<span class="t" style="left:1246.84px;top:435.00px;font-size:14px;font-weight:400;color:#333333;letter-spacing:0.051px;word-spacing:-1.19px">just now</span>
<span class="t" style="left:335.07px;top:482.00px;font-size:14px;font-weight:400;color:#3f4f9f;letter-spacing:-0.165px">result.sys_id</span>
<span class="t" style="left:516.10px;top:482.00px;font-size:14px;font-weight:400;color:#333333;letter-spacing:-0.012px;word-spacing:-1.19px">Extract returned sys_id &amp; store in stage.external_reference</span>
<span class="t" style="left:893.85px;top:482.00px;font-size:14px;font-weight:400;color:#3f4f9f;letter-spacing:-0.159px;word-spacing:-1.19px">PI - Source Reference</span>
<span class="t" style="left:1043.66px;top:482.00px;font-size:14px;font-weight:400;color:#333333;letter-spacing:0.130px">global</span>
<span class="t" style="left:1117.68px;top:482.00px;font-size:14px;font-weight:400;color:#333333;letter-spacing:1.002px">100</span>
<span class="t" style="left:1246.18px;top:482.00px;font-size:14px;font-weight:400;color:#333333;letter-spacing:-0.246px;word-spacing:-1.19px">4d ago</span>
<span class="t" style="left:23.90px;top:798.00px;font-size:12px;font-weight:400;color:#555;letter-spacing:0.104px">Global</span>
<span class="t" style="left:63.83px;top:798.00px;font-size:12px;font-weight:400;color:#555;letter-spacing:0.000px">|</span>
<span class="t" style="left:88.59px;top:798.00px;font-size:12px;font-weight:400;color:#555;letter-spacing:0.223px">Incident</span>
<span class="t" style="left:136.83px;top:798.00px;font-size:12px;font-weight:400;color:#555;letter-spacing:0.000px">|</span>
<span class="t" style="left:162.32px;top:798.00px;font-size:12px;font-weight:400;color:#555;letter-spacing:-0.032px;word-spacing:-1.02px">Push-Pull Incident</span>
<span class="t" style="left:1326.18px;top:798.00px;font-size:12px;font-weight:400;color:#555;letter-spacing:0.114px">Active</span>
<span class="t" style="left:1364.03px;top:798.00px;font-size:12px;font-weight:400;color:#555;letter-spacing:0.000px">|</span>
<span class="t" style="left:1371.82px;top:798.00px;font-size:12px;font-weight:400;color:#555;letter-spacing:0.179px;word-spacing:-1.02px">Built: Never</span>
<div id="frame"></div>
</body>
</html>
